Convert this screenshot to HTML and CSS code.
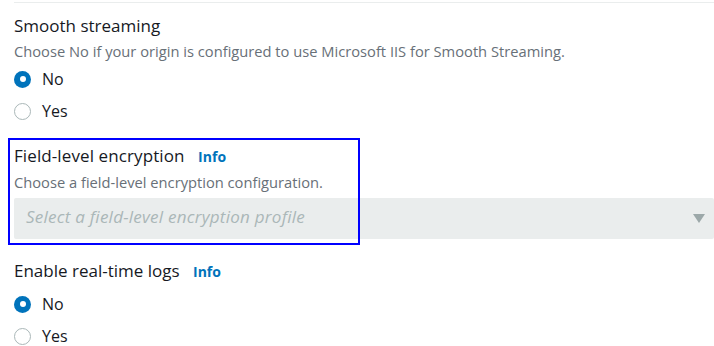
FILE: index.html
```html
<!DOCTYPE html>
<html lang="en">
<head>
<meta charset="utf-8">
<title>Cache behavior settings</title>
<link rel="stylesheet" href="styles.css">
</head>
<body>
<div class="page">
  <div class="divider"></div>

  <section class="field field-first">
    <div class="label">Smooth streaming</div>
    <div class="desc">Choose No if your origin is configured to use Microsoft IIS for Smooth Streaming.</div>
    <div class="radios">
      <label class="radio"><span class="dot checked"></span><span class="radio-text">No</span></label>
      <label class="radio"><span class="dot"></span><span class="radio-text">Yes</span></label>
    </div>
  </section>

  <section class="field field-fle">
    <div class="label">Field-level encryption <a class="info">Info</a></div>
    <div class="desc">Choose a field-level encryption configuration.</div>
    <div class="select">
      <span class="placeholder">Select a field-level encryption profile</span>
      <svg class="caret" width="12" height="9" viewBox="0 0 12 9"><path d="M0 0H12L6 9Z" fill="#9ca8a9"/></svg>
    </div>
    <div class="highlight"></div>
  </section>

  <section class="field field-logs">
    <div class="label">Enable real-time logs <a class="info">Info</a></div>
    <div class="radios radios-tight">
      <label class="radio"><span class="dot checked"></span><span class="radio-text">No</span></label>
      <label class="radio"><span class="dot"></span><span class="radio-text">Yes</span></label>
    </div>
  </section>
</div>
</body>
</html>
```
FILE: styles.css
```css
html, body {
  margin: 0;
  padding: 0;
  background: #ffffff;
}
body {
  font-family: "Open Sans", "Noto Sans", Arial, sans-serif;
  color: #16191f;
  overflow: hidden;
}
.page {
  padding: 2px 0 0 14px;
}
.divider {
  height: 1px;
  background: #eaeded;
}
.field {
  position: relative;
  display: flex;
  flex-direction: column;
}
.field-first {
  margin-top: 11px;
}
.field-fle {
  margin-top: 17px;
}
.field-logs {
  margin-top: 20px;
}
.label {
  font-size: 17px;
  line-height: 24px;
  color: #16191f;
}
.field-fle .label {
  letter-spacing: 0.1px;
}
.info {
  font-size: 14px;
  font-weight: 700;
  color: #0073bb;
  margin-left: 9px;
  text-decoration: none;
}
.desc {
  font-size: 14.7px;
  line-height: 20px;
  margin-top: 3px;
  color: #687078;
}
.radios {
  display: flex;
  flex-direction: column;
  margin-top: 2px;
}
.radios-tight {
  margin-top: 4px;
}
.radio {
  display: flex;
  align-items: center;
  height: 32px;
  font-size: 16px;
  color: #16191f;
}
.dot {
  box-sizing: border-box;
  width: 17px;
  height: 17px;
  border-radius: 50%;
  border: 1.5px solid #aab7b8;
  background: #ffffff;
  margin-right: 11px;
  flex: none;
  display: flex;
  align-items: center;
  justify-content: center;
}
.dot.checked {
  border: none;
  background: #0073bb;
}
.dot.checked::after {
  content: "";
  width: 6px;
  height: 6px;
  border-radius: 50%;
  background: #ffffff;
}
.select {
  margin-top: 6px;
  height: 41px;
  box-sizing: border-box;
  background: #eaeded;
  border-radius: 2px;
  display: flex;
  align-items: center;
  justify-content: space-between;
  padding: 0 9px 3px 12px;
}
.placeholder {
  font-size: 17px;
  letter-spacing: 0.25px;
  font-style: italic;
  color: #aab7b8;
  line-height: 22px;
}
.caret {
  display: block;
  margin-top: 3px;
}
.highlight {
  position: absolute;
  top: -6px;
  left: -6px;
  width: 352px;
  bottom: -6px;
  box-sizing: border-box;
  border: 2px solid #0000ff;
  pointer-events: none;
}
```
